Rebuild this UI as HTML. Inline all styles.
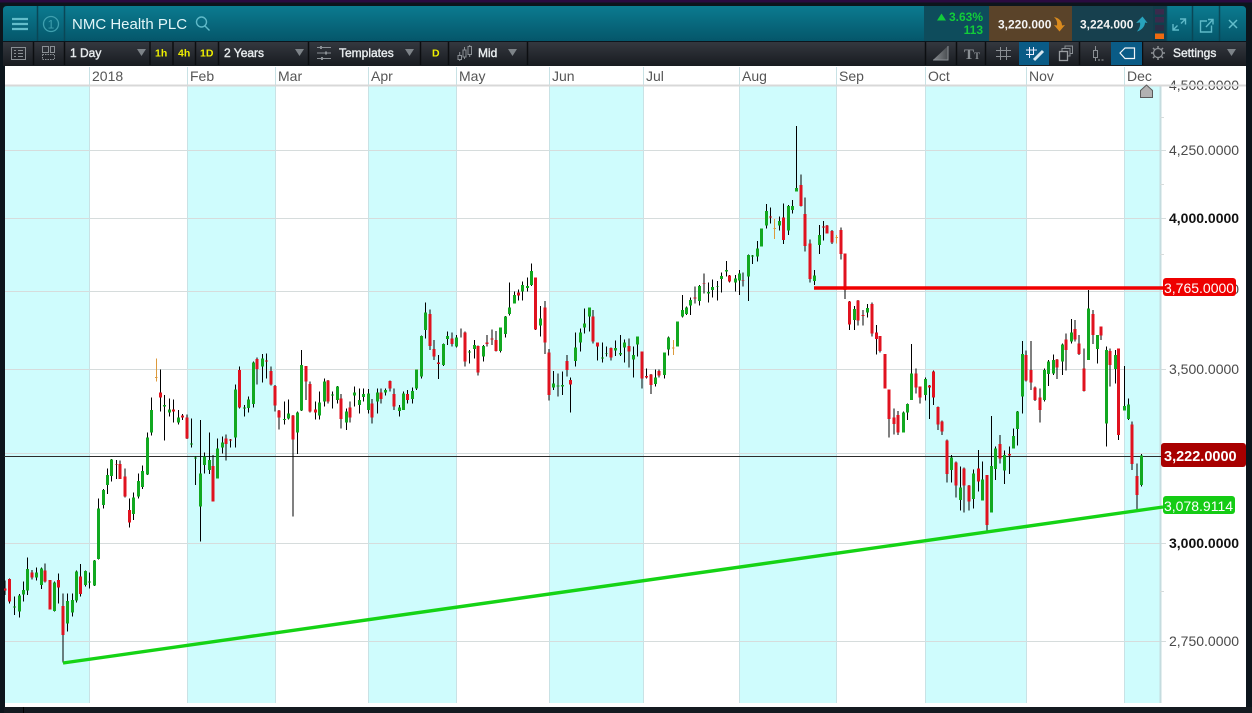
<!DOCTYPE html>
<html>
<head>
<meta charset="utf-8">
<title>NMC Health PLC</title>
<style>
html,body{margin:0;padding:0;background:#0c151c;width:1252px;height:713px;overflow:hidden}
svg{display:block;position:absolute;left:0;top:0}
text{font-family:"Liberation Sans",Arial,sans-serif}
.w{stroke:#000;stroke-width:3;fill:none;shape-rendering:crispEdges}
.g{stroke:#12a820;stroke-width:9;fill:none;shape-rendering:crispEdges}
.r{stroke:#e0121f;stroke-width:9;fill:none;shape-rendering:crispEdges}
.o{stroke:#dc9a3c;stroke-width:3;fill:none;shape-rendering:crispEdges}
.ax{font-size:14px;fill:#4a4a4a}
.axb{font-size:14px;fill:#111;font-weight:700}
.dt{font-size:14px;fill:#555}
.tb{font-size:12px;fill:#e8ecee;stroke:#e8ecee;stroke-width:.4}
.y{font-size:10.5px;font-weight:700;fill:#efef00}
.ar{fill:#7d8388}
.sep{stroke:#0c0e11;stroke-width:1.5}
.hs{stroke:#0a4756;stroke-width:1.5}
.ic{stroke:#8a8f94;fill:none;stroke-width:1}
.hi{stroke:#5fb9c8;fill:none;stroke-width:1.4}
</style>
</head>
<body>
<svg width="1252" height="713" viewBox="0 0 1252 713" xmlns="http://www.w3.org/2000/svg">
<defs>
<linearGradient id="hd" x1="0" y1="0" x2="0" y2="1"><stop offset="0" stop-color="#0b7b90"/><stop offset="1" stop-color="#05566a"/></linearGradient>
<linearGradient id="tbg" x1="0" y1="0" x2="0" y2="1"><stop offset="0" stop-color="#34383f"/><stop offset="1" stop-color="#181b20"/></linearGradient>
<linearGradient id="rl" x1="0" y1="0" x2="1" y2="0"><stop offset="0" stop-color="#8a8e92"/><stop offset="1" stop-color="#4a4e52"/></linearGradient>
</defs>
<rect width="1252" height="713" fill="#0c151c"/>
<rect width="1252" height="2.5" fill="#2a0b40"/>

<!-- header -->
<path d="M3 41V10Q3 6 7 6H1242Q1246 6 1246 10V41Z" fill="url(#hd)"/>
<path class="hs" d="M37.5 6V41M64.5 6V41M1166.5 6V41M1192.5 6V41M1219.5 6V41"/>
<path d="M12 19H28M12 24H28M12 29H28" stroke="#63bdca" stroke-width="2.2" fill="none"/>
<circle cx="51" cy="24" r="7.5" fill="none" stroke="#3f9fae" stroke-width="1.3"/>
<text x="51" y="28.5" font-size="12" fill="#3f9fae" text-anchor="middle">1</text>
<text x="72" y="29" font-size="15" fill="#e2f6f8">NMC Health PLC</text>
<circle cx="201.5" cy="22" r="5" class="hi" stroke-width="1.2"/>
<path d="M205 26L209.5 30.5" class="hi"/>

<rect x="924" y="6" width="65" height="35" fill="#0e4c5c"/>
<rect x="989" y="6" width="83" height="35" fill="#5a4329"/>
<rect x="1072" y="6" width="81" height="35" fill="#17404e"/>
<rect x="1153" y="6" width="13" height="35" fill="#123e4c"/>
<path d="M937 20.5L941.5 13.5L946 20.5Z" fill="#12cc3a"/>
<text x="983" y="21" font-size="12" font-weight="700" fill="#12cc3a" text-anchor="end">3.63%</text>
<text x="983" y="34" font-size="12" font-weight="700" fill="#12cc3a" text-anchor="end">113</text>
<text x="998" y="28.5" font-size="12" font-weight="700" fill="#f4f4f4">3,220.000</text>
<path d="M1054 17C1059 18 1062 21 1062 25.5L1065 25L1059.5 31.5L1054 25L1057 25.5C1057.5 22 1056.500 19.500 1054 17Z" fill="#d98a1e"/>
<text x="1080" y="28.5" font-size="12" font-weight="700" fill="#f4f4f4">3,224.000</text>
<path d="M1137 31.500C1140 28 1140.500 25 1140 22.500L1136 23L1142.500 16.500L1147.500 23L1145 22.500C1145 26 1142 30 1137 31.500Z" fill="#28a3bd"/>
<rect x="1155" y="9" width="9" height="5.5" fill="#3a2a4c"/>
<rect x="1155" y="17" width="9" height="5.5" fill="#3a2a4c"/>
<rect x="1155" y="25" width="9" height="6" fill="#2b2c44"/>
<rect x="1155" y="33.5" width="9" height="5.5" fill="#ee6a10"/>

<path class="hi" d="M1173 24V30H1179M1173 30L1177.5 25.5M1185 19H1185.5V24.5M1180 19H1185.5M1185.5 19L1181 23.5"/>
<path class="hi" d="M1207 21H1200.5V32H1211.5V25.5M1206 27L1212.5 20M1208 19.5H1213V24.5"/>
<path d="M1229 20L1237 28M1237 20L1229 28" stroke="#63bdca" stroke-width="1.5" fill="none"/>

<!-- toolbar -->
<rect x="3" y="42" width="1243" height="24" fill="url(#tbg)"/>
<path class="sep" d="M33.5 42V65M64.5 42V65M150 42V65M173 42V65M195.5 42V65M218.5 42V65M308.5 42V65M420.5 42V65M448.5 42V65M527.5 42V65M925.5 42V65M956.5 42V65M985.5 42V65M1079.5 42V65M1142.5 42V65"/>
<path class="ic" d="M11.5 47.5H25.5V59.5H11.5ZM14 50.5H16M18 50.5H23M14 53.5H16M18 53.5H23M14 56.5H16M18 56.5H23"/>
<path class="ic" d="M42.5 46.5H48.5V52.5H42.5ZM50.5 46.5H54.5V52.5H50.5Z"/>
<path class="ic" stroke-dasharray="1.5 1" d="M42.5 54.5V59.5H54.5V54.5H42.5"/>
<text x="70" y="57" class="tb">1 Day</text>
<path class="ar" d="M137 49H146L141.5 56Z"/>
<text x="155" y="56.5" class="y">1h</text>
<text x="178" y="56.5" class="y">4h</text>
<text x="200" y="56.5" class="y">1D</text>
<text x="224" y="57" class="tb">2 Years</text>
<path class="ar" d="M295 49H304L299.5 56Z"/>
<path class="ic" stroke-width="1.3" d="M317 47.5H331M317 53H331M317 58.5H331"/>
<path d="M321 46V49M326 51.5V54.5M322 57V60" stroke="#8a8f94" stroke-width="2" fill="none"/>
<text x="339" y="57" class="tb">Templates</text>
<path class="ar" d="M405 49H414L409.5 56Z"/>
<text x="432" y="56.5" class="y">D</text>
<path class="ic" d="M458 55.5h3.5v4h-3.5zM463 50h3v7h-3zM468 46.5h3.5v8h-3.5zM459.7 52V55.5M459.7 59.5V61M464.5 47V50M464.5 57V59M469.7 45V46.5M469.7 54.5V57"/>
<text x="478" y="57" class="tb">Mid</text>
<path class="ar" d="M508 49H517L512.5 56Z"/>

<path d="M933 60L948 46V60Z" fill="url(#rl)"/>
<path d="M933 60H948V46" class="ic" stroke="#a0a4a8"/>
<text x="964" y="59" font-size="15" fill="#8a8f94" style="font-family:'Liberation Serif',serif" font-weight="700">T</text>
<text x="974" y="59" font-size="9" fill="#8a8f94" style="font-family:'Liberation Serif',serif" font-weight="700">T</text>
<path d="M1000.5 47V60M1006.5 47V60M996 50.5H1011M996 56.5H1011" class="ic" stroke="#a4a8ac"/>
<rect x="1019" y="42" width="30" height="23" fill="#0a5b86"/>
<path d="M1029.5 47V58M1033.5 47V55M1026 50H1037M1026 54.5H1034" stroke="#eef" stroke-width="1" fill="none"/>
<path d="M1034 60L1043 51" stroke="#d7e6ef" stroke-width="3" fill="none"/>
<rect x="1059.5" y="51.5" width="8" height="9" fill="none" stroke="#9a9ea2" stroke-width="1.3"/>
<path d="M1062 51V48.5H1070V56H1068M1065 48V46H1072.5V53.5H1070.5" class="ic" stroke="#9a9ea2" stroke-width="1.3"/>
<path class="ic" stroke="#9a9ea2" d="M1093.5 50.5H1097.5V57.5H1093.5ZM1095.5 46V50.5M1095.5 57.5V61"/>
<path d="M1098 60H1104" stroke="#9a9ea2" stroke-dasharray="2 1.5" fill="none"/>
<rect x="1111" y="42" width="31" height="23" fill="#0a5b86"/>
<path d="M1120 53L1125 48H1134.5V58.5H1125Z" fill="none" stroke="#f2f6f8" stroke-width="1.2"/>
<circle cx="1158" cy="53" r="4.5" fill="none" stroke="#8d9196" stroke-width="1.3"/>
<path d="M1158 46V48M1158 58V60M1151 53H1153M1163 53H1165M1153 48L1154.5 49.5M1161.5 56.5L1163 58M1153 58L1154.5 56.5M1161.5 49.5L1163 48" stroke="#8d9196" stroke-width="1.5" fill="none"/>
<text x="1173" y="57" class="tb">Settings</text>
<path class="ar" d="M1227 49H1236L1231.5 56Z"/>

<!-- chart -->
<rect x="5" y="66" width="1241" height="641" fill="#fff"/>
<g fill="#cffcfd">
<rect x="5" y="86" width="84" height="617"/>
<rect x="187.5" y="86" width="88" height="617"/>
<rect x="368.5" y="86" width="88" height="617"/>
<rect x="549" y="86" width="94" height="617"/>
<rect x="739.5" y="86" width="97" height="617"/>
<rect x="925.5" y="86" width="101" height="617"/>
<rect x="1124.5" y="86" width="36" height="617"/>
</g>
<path d="M5 150.500H1166M5 218.500H1166M5 291.500H1166M5 369.500H1166M5 453.500H1166M5 543.500H1166M5 641.500H1166" stroke="#d6dcdc" stroke-width="1" fill="none"/>
<path d="M89.500 67V703M187.500 67V703M275.500 67V703M368.500 67V703M456.500 67V703M549.500 67V703M643.500 67V703M739.500 67V703M836.500 67V703M925.500 67V703M1026.500 67V703M1124.500 67V703" stroke="#c9e2e5" stroke-width="1" fill="none"/>
<path d="M1160.500 86V703" stroke="#c5dcdf" stroke-width="2" fill="none"/>
<path d="M1160 117.500H1164M1160 184.500H1164M1160 254.500H1164M1160 591.500H1164" stroke="#d6dcdc" fill="none"/>

<text x="92" y="81" class="dt">2018</text><text x="190" y="81" class="dt">Feb</text><text x="278" y="81" class="dt">Mar</text><text x="371" y="81" class="dt">Apr</text><text x="459" y="81" class="dt">May</text><text x="552" y="81" class="dt">Jun</text><text x="646" y="81" class="dt">Jul</text><text x="742" y="81" class="dt">Aug</text><text x="839" y="81" class="dt">Sep</text><text x="928" y="81" class="dt">Oct</text><text x="1029" y="81" class="dt">Nov</text><text x="1127" y="81" class="dt">Dec</text>

<text x="1169" y="90" class="ax">4,500.0000</text>
<text x="1169" y="155" class="ax">4,250.0000</text>
<text x="1169" y="223" class="axb">4,000.0000</text>
<text x="1169" y="294" class="ax">3,750.0000</text>
<text x="1169" y="374" class="ax">3,500.0000</text>
<text x="1169" y="548" class="axb">3,000.0000</text>
<text x="1169" y="646" class="ax">2,750.0000</text>
<path d="M5 85.500H1246" stroke="#d8d8d8" stroke-width="2"/>
<path d="M1140.500 97.500V90.500L1146.500 85L1152.500 90.500V97.500Z" fill="#b2b2b2" stroke="#5a5a5a"/>

<path d="M0 456.500H1161" stroke="#2b2b2b" stroke-width="1" fill="none"/>

<!-- candles: segment 1 -->
<g transform="translate(0 340) scale(.33333)">
<path class="w" d="M15 722V765M29 715V790M43 770V825M58 762V833M70 725V785M82 652V765M96 690V718M109 682V722M124 682V747M135 670V727M150 720V808M163 725V815M175 700V790M189 760V968M202 760V875M217 760V830M229 692V787M241 672V770M256 692V740M268 697V745M283 660V738M295 475V658M310 447V505M322 385V462M335 357V425M349 360V417M360 362V417M375 385V472M388 475V563M400 457V540M415 400V475M427 377V447M442 277V405M454 172V287M481 88V215M493 165V302M508 175V230M520 178V248M535 210V253M547 222V240M561 224V297M574 235V322M586 350V435M601 240V605M613 338V400M628 277V402M639 345V485M652 295V416M667 290V340M678 283V362M692 297V323M706 133V323M719 80V205M733 195V230M745 170V218M760 65V203M771 52V133M787 42V127M799 40V115M813 80V137M825 135V215M837 210V268M853 185V253M865 178V238M879 225V530M892 215V342M905 30V213M918 78V180M930 125V218M946 185V238M958 155V238"/>
<path class="o" d="M469 55V125M465 112H473"/>
<path class="g" d="M43 800V803M58 767V815M70 750V763M82 687V752M109 697V713M124 686V735M163 727V813M202 783V851M217 780V818M229 695V782M256 693V735M268 725V728M283 662V737M295 505V657M310 450V495M322 405V435M335 358V408M400 472V522M415 423V470M427 393V441M442 293V403M454 210V278M493 195V200M508 209V218M535 232V248M574 310V313M586 353V355M601 400V500M613 350V375M628 360V390M652 325V415M667 307V323M706 148V293M733 203V206M745 178V204M760 67V192M787 55V80M853 237V240M865 220V236M892 217V278M905 75V211M958 187V227"/>
<path class="r" d="M15 745V752M29 717V785M96 697V713M135 692V725M150 720V808M175 720V743M189 798V885M241 710V762M349 372V374M360 372V417M375 410V470M388 510V548M481 157V173M520 208V215M547 226V233M561 232V295M639 378V485M678 295V312M692 299V302M719 90V203M771 57V87M799 62V65M813 93V133M825 138V197M837 212V233M879 226V298M918 78V125M930 132V215M946 208V217"/>
</g>
<!-- segment 2 -->
<g transform="translate(320 250) scale(.33333)">
<path class="w" d="M13 385V470M24 390V460M37 425V475M52 408V460M63 432V535M79 475V540M90 455V518M103 410V470M118 415V490M130 415V455M145 417V490M156 447V520M172 415V490M183 415V460M197 415V437M210 392V425M222 415V480M238 465V500M250 425V480M263 420V460M277 412V460M289 358V420M304 257V385M316 157V265M330 178V300M342 270V330M355 315V387M370 280V348M382 245V285M396 248V290M409 255V292M423 235V263M435 245V350M448 300V340M463 270V325M474 287V377M490 285V335M501 255V290M516 238V285M528 243V305M541 232V308M556 198V263M568 97V197M583 125V160M595 118V152M607 95V152M622 83V125M634 40V108M647 82V240M661 168V260M675 153V312M687 297V452M700 363V420M714 370V440M727 365V435M741 315V380M752 382V488M767 247V350M781 235V305M793 175V250M808 172V245M819 180V280M833 278V332M847 278V338M859 290V320M873 292V332M886 272V318M901 255V318M913 268V338M927 265V352M940 290V383M952 260V320"/>
<path class="g" d="M13 395V455M37 434V437M52 410V450M79 485V518M103 427V437M118 450V465M130 432V441M145 430V480M172 427V455M197 420V428M238 473V483M250 430V480M277 423V447M289 358V415M304 258V380M316 187V240M370 282V345M382 258V267M409 262V290M448 305V308M463 285V297M490 288V320M541 233V303M556 200V252M568 172V192M583 135V160M607 105V125M622 108V114M634 63V105M661 205V227M700 400V412M714 407V409M727 405V410M767 292V333M781 248V278M793 220V233M808 173V200M847 323V325M859 310V312M886 294V302M901 309V313M913 277V293M940 315V328M952 260V283"/>
<path class="r" d="M24 392V455M63 445V507M90 472V503M156 460V503M183 427V447M210 393V415M222 432V470M263 432V450M330 192V288M342 297V320M355 337V342M396 265V282M435 247V335M474 288V367M501 277V282M516 266V268M528 270V303M595 128V137M647 82V238M675 172V277M687 307V435M741 333V360M752 390V404M819 200V275M833 278V290M873 294V322M927 288V305"/>
</g>
<!-- segment 3 -->
<g transform="translate(630 290) scale(.33333)">
<path class="w" d="M36 185V295M49 235V265M63 252V312M76 238V290M87 238V262M103 187V265M115 140V197M142 95V170"/>
<path class="o" d="M130 150V195M126 173.500H134"/>
<path class="g" d="M76 262V282M103 188V255M115 142V178M142 95V170"/>
<path class="r" d="M36 185V265M49 258V262M63 254V285M87 243V256"/>
</g>
<!-- segment 4 -->
<g transform="translate(640 120) scale(.33333)">
<path class="w" d="M127 525V592M139 560V585M151 532V585M165 500V550M178 495V557M192 460V520M205 487V548M217 478V533M232 483V542M244 458V517M259 423V470M269 465V487M286 465V515M298 450V525M309 457V500M325 403V543M337 405V432M352 363V425M364 325V380M379 252V325M391 262V310M418 290V332M430 250V372M445 255V345M457 240V280M469 18V215M483 163V260M495 232V395M510 358V487M523 450V495M538 315V402M550 303V362M561 315V340M576 330V372M603 322V418"/>
<path class="o" d="M404 297V357M400 325.500H408M590 345V370M586 352.500H594"/>
<path class="g" d="M127 570V590M139 562V582M151 540V557M178 498V543M205 516V521M217 501V510M232 498V500M244 468V477M259 450V455M286 475V488M298 460V482M325 405V470M337 407V409M352 385V410M364 325V380M379 273V317M418 303V317M445 258V332M457 258V270M469 204V215M523 466V483M538 345V375"/>
<path class="r" d="M165 532V535M192 490V492M269 467V485M309 480V482M391 290V292M430 292V360M483 195V258M495 282V378M510 370V477M550 320V322M561 316V340M576 333V368M603 330V402M615 400V505"/>
</g>
<!-- segment 5 -->
<g transform="translate(840 280) scale(.33333)">
<path class="w" d="M15 0V57M29 63V150M43 78V150M54 60V137M69 90V137M82 72V113M96 67V170M109 135V223M120 168V218M135 222V325M147 328V473M162 385V463M174 393V465M190 395V458M203 370V420M214 192V360M228 265V340M240 320V370M256 292V362M268 315V417M280 272V375M294 380V450M306 422V465M321 478V607M334 525V607M348 545V652M361 560V692M372 563V698M387 615V692M400 568V685M415 510V635M427 545V662M441 585V760M455 408V698M466 500V600M480 465V550M493 512V612M508 500V582M520 445V505M533 393V497M547 183V400M558 212V305M573 183V330M585 320V363M600 325V428M613 265V365M625 240V318M640 223V285M651 237V297M667 190V285M678 160V272M695 117V190M705 120V185M717 165V225M732 205V335M745 30V240M759 90V192M773 165V250M783 140V180M799 200V500M810 205V320M826 210V310M836 205V480M853 258V392M866 355V420M876 425V570M891 550V688M904 522V620"/>
<path class="g" d="M43 87V120M82 84V98M190 397V457M203 372V398M214 280V360M256 297V345M334 533V570M361 622V660M400 580V657M427 598V662M455 558V698M466 505V567M493 525V572M520 468V505M533 394V447M547 222V350M613 270V360M625 245V282M640 240V280M667 193V245M695 158V185M745 85V240M773 165V207M799 210V430M826 225V267M853 378V392M866 373V417M904 527V615"/>
<path class="r" d="M15 0V30M29 65V133M54 62V122M69 105V108M96 72V160M109 157V177M120 168V213M135 222V325M147 328V417M162 412V432M174 405V457M228 280V323M240 320V353M268 317V323M280 274V353M294 381V433M306 424V455M321 482V582M348 547V617M372 565V617M387 617V665M415 565V605M441 585V735M480 492V535M508 522V527M558 225V302M573 270V308M585 322V360M600 353V390M651 238V263M678 178V210M705 147V178M717 190V222M732 265V333M759 102V165M783 140V167M810 213V255M836 205V465M876 433V552M891 588V645"/>
</g>

<!-- drawn lines -->
<path d="M814 288H1163" stroke="#f00000" stroke-width="3.4" fill="none"/>
<path d="M63 663L1163 507" stroke="#15d315" stroke-width="3.4" fill="none"/>

<!-- price labels -->
<rect x="1163" y="278" width="73" height="18" rx="3" fill="#ee0000"/>
<text x="1164" y="293" font-size="14" fill="#fff">3,765.0000</text>
<rect x="1161" y="443" width="85" height="24" rx="3" fill="#a80000"/>
<text x="1164" y="461" font-size="14.5" font-weight="700" fill="#fff">3,222.0000</text>
<rect x="1163" y="496" width="72" height="18" rx="3" fill="#15cc15"/>
<text x="1164" y="511" font-size="14" fill="#fff">3,078.9114</text>

<!-- footer -->
<rect x="0" y="707" width="1252" height="6" fill="#141a20"/>
<rect x="0" y="66" width="4" height="647" fill="#0c151c"/>
<path d="M23.5 707V713" stroke="#000" fill="none"/>
</svg>
</body>
</html>
